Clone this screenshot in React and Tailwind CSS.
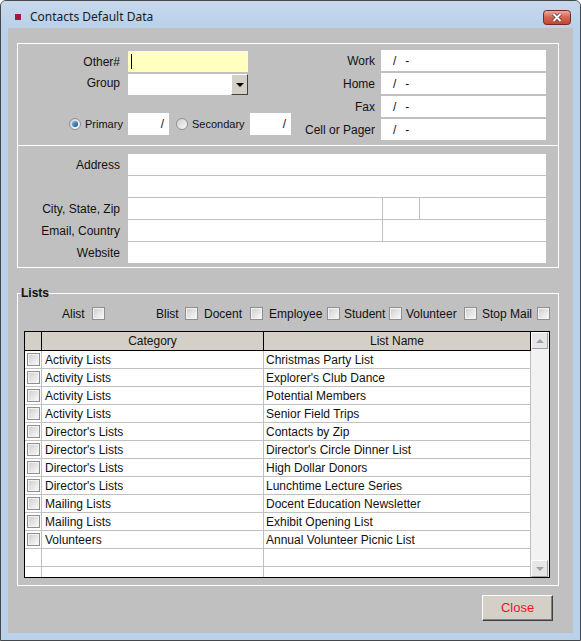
import React from "react"

const rows = [
  ["Activity Lists", "Christmas Party List"],
  ["Activity Lists", "Explorer's Club Dance"],
  ["Activity Lists", "Potential Members"],
  ["Activity Lists", "Senior Field Trips"],
  ["Director's Lists", "Contacts by Zip"],
  ["Director's Lists", "Director's Circle Dinner List"],
  ["Director's Lists", "High Dollar Donors"],
  ["Director's Lists", "Lunchtime Lecture Series"],
  ["Mailing Lists", "Docent Education Newsletter"],
  ["Mailing Lists", "Exhibit Opening List"],
  ["Volunteers", "Annual Volunteer Picnic List"],
]

const listFlags = [
  { label: "Alist", cls: "ml-[44px] w-[43px]" },
  { label: "Blist", cls: "ml-[51px] w-[42px]" },
  { label: "Docent", cls: "ml-[6px] w-[59px]" },
  { label: "Employee", cls: "ml-[6px] w-[71px]" },
  { label: "Student", cls: "ml-[4px] w-[58px]" },
  { label: "Volunteer", cls: "ml-[4px] w-[71px]" },
  { label: "Stop Mail", cls: "ml-[5px] w-[68px]" },
]

function Check() {
  return (
    <span className="block w-[13px] h-[13px] border border-[#8e8f8f] bg-gradient-to-br from-[#cdcdcd] to-[#fbfbfb] shadow-[inset_0_0_0_1px_#f2f2f2]" />
  )
}

function Radio({ checked }) {
  return (
    <span className="flex items-center justify-center w-[12px] h-[12px] rounded-full border border-[#8e8f8f] bg-gradient-to-br from-[#cfcfcf] to-[#fafafa]">
      {checked && <span className="w-[6px] h-[6px] rounded-full bg-gradient-to-br from-[#7cc0f0] to-[#0d4a88]" />}
    </span>
  )
}

function Phone() {
  return (
    <div className="w-[165px] h-[21px] bg-white flex items-center">
      <span className="ml-[12px]">/</span>
      <span className="ml-[9px]">-</span>
    </div>
  )
}

function ScrollBtn({ up }) {
  return (
    <div className="w-[17px] h-[17px] bg-[#e6e6e6] border border-t-white border-l-white border-r-[#a0a0a0] border-b-[#a0a0a0] flex items-center justify-center">
      {up ? (
        <span className="w-0 h-0 border-l-[4px] border-r-[4px] border-b-[4px] border-l-transparent border-r-transparent border-b-[#a0a0a0]" />
      ) : (
        <span className="w-0 h-0 border-l-[4px] border-r-[4px] border-t-[4px] border-l-transparent border-r-transparent border-t-[#a0a0a0]" />
      )}
    </div>
  )
}

export default function App() {
  return (
    <div className="w-[581px] h-[641px] bg-[#b9d1ea] border border-[#474747] rounded-t-[6px] flex flex-col overflow-hidden">
      {/* Title bar */}
      <div className="h-[27px] shrink-0 flex items-center pt-[5px] pl-[14px] pr-[9px] bg-gradient-to-b from-[#c6d8ec] to-[#b9d1ea]">
        <span className="w-[6px] h-[6px] bg-[#9c1c3c]" />
        <span className="ml-[9px] text-[12px] leading-[14px] text-[#1b1b1b] font-['Noto_Sans',sans-serif]">Contacts Default Data</span>
        <svg className="ml-auto" width="28" height="15" viewBox="0 0 28 15">
          <defs>
            <linearGradient id="xg" x1="0" y1="0" x2="0" y2="1">
              <stop offset="0" stopColor="#eab0a4" />
              <stop offset="0.45" stopColor="#d66a56" />
              <stop offset="1" stopColor="#c1432d" />
            </linearGradient>
          </defs>
          <rect x="0.5" y="0.5" width="27" height="14" rx="3" fill="url(#xg)" stroke="#6f2b22" />
          <path d="M10.5 4 L17.5 11 M17.5 4 L10.5 11" stroke="#5a3a35" strokeWidth="3.6" />
          <path d="M10.5 4 L17.5 11 M17.5 4 L10.5 11" stroke="#ffffff" strokeWidth="2" />
        </svg>
      </div>

      {/* Client area */}
      <div className="ml-[7px] w-[565px] h-[605px] shrink-0 bg-[#c0c0c0] text-[12px] leading-[14px] text-[#111] font-['Liberation_Sans',Arial,sans-serif] flex flex-col">
        {/* Contact numbers + address */}
        <div className="ml-[9px] mt-[15px] w-[542px] h-[225px] border border-white">
          <div className="h-[102px] border-b border-white flex">
            <div className="w-[282px] pt-[7px]">
              <div className="flex items-center h-[21px]">
                <span className="w-[102px] text-right">Other#</span>
                <div className="ml-[8px] w-[120px] h-[21px] bg-[#ffffc0] flex items-center">
                  <span className="ml-[3px] w-[1px] h-[15px] bg-black" />
                </div>
              </div>
              <div className="flex items-start h-[21px] mt-[2px]">
                <span className="w-[102px] text-right mt-[2px]">Group</span>
                <div className="ml-[8px] w-[120px] h-[21px] flex">
                  <div className="w-[103px] bg-white" />
                  <div className="w-[17px] bg-[#d4d0c8] border border-t-white border-l-white border-r-[#404040] border-b-[#404040] flex items-center justify-center">
                    <span className="w-0 h-0 border-l-[4px] border-r-[4px] border-t-[4px] border-l-transparent border-r-transparent border-t-black" />
                  </div>
                </div>
              </div>
              <div className="flex items-center h-[22px] mt-[18px] text-[11px]">
                <div className="w-[110px] pl-[51px] flex items-center">
                  <Radio checked />
                  <span className="ml-[4px]">Primary</span>
                </div>
                <div className="w-[41px] h-[22px] bg-white flex items-center justify-end pr-[5px] text-[12px]">/</div>
                <div className="w-[81px] pl-[7px] flex items-center">
                  <Radio />
                  <span className="ml-[4px]">Secondary</span>
                </div>
                <div className="w-[41px] h-[22px] bg-white flex items-center justify-end pr-[5px] text-[12px]">/</div>
              </div>
            </div>
            <div className="pt-[6px] flex flex-col gap-[2px]">
              {["Work", "Home", "Fax", "Cell or Pager"].map((l) => (
                <div key={l} className="flex items-center h-[21px]">
                  <span className="w-[75px] text-right">{l}</span>
                  <div className="ml-[6px]">
                    <Phone />
                  </div>
                </div>
              ))}
            </div>
          </div>
          <div className="pt-[8px] flex flex-col gap-[1px]">
            <div className="flex items-center h-[21px]">
              <span className="w-[102px] text-right">Address</span>
              <div className="ml-[8px] w-[418px] h-[21px] bg-white" />
            </div>
            <div className="flex items-center h-[21px]">
              <span className="w-[102px]" />
              <div className="ml-[8px] w-[418px] h-[21px] bg-white" />
            </div>
            <div className="flex items-center h-[21px]">
              <span className="w-[102px] text-right">City, State, Zip</span>
              <div className="ml-[8px] w-[418px] h-[21px] flex gap-[1px]">
                <div className="w-[254px] bg-white" />
                <div className="w-[36px] bg-white" />
                <div className="flex-1 bg-white" />
              </div>
            </div>
            <div className="flex items-center h-[21px]">
              <span className="w-[102px] text-right">Email, Country</span>
              <div className="ml-[8px] w-[418px] h-[21px] flex gap-[1px]">
                <div className="w-[254px] bg-white" />
                <div className="flex-1 bg-white" />
              </div>
            </div>
            <div className="flex items-center h-[21px]">
              <span className="w-[102px] text-right">Website</span>
              <div className="ml-[8px] w-[418px] h-[21px] bg-white" />
            </div>
          </div>
        </div>

        {/* Lists */}
        <fieldset className="ml-[9px] mt-[18px] w-[542px] h-[300px] border border-white">
          <legend className="ml-[3px] font-bold leading-[14px]">Lists</legend>
          <div className="mt-[7px] h-[13px] flex items-center">
            {listFlags.map((f) => (
              <div key={f.label} className={`${f.cls} flex items-center justify-between`}>
                <span>{f.label}</span>
                <Check />
              </div>
            ))}
          </div>

          <div className="ml-[6px] mt-[11px] w-[526px] h-[247px] border border-black flex">
            <div className="w-[506px] flex flex-col overflow-hidden">
              <div className="grid grid-cols-[17px_222px_1fr] h-[19px] shrink-0 bg-[#d4d0c8] border-b border-black">
                <div className="border-r border-black" />
                <div className="border-r border-black flex items-center justify-center">Category</div>
                <div className="border-r border-black flex items-center justify-center">List Name</div>
              </div>
              {rows.map(([cat, name], i) => (
                <div key={i} className="grid grid-cols-[17px_222px_1fr] h-[18px] shrink-0 bg-white border-b border-[#c0c0c0]">
                  <div className="border-r border-[#c0c0c0] flex items-center pl-[2px]">
                    <Check />
                  </div>
                  <div className="border-r border-[#c0c0c0] flex items-center pl-[3px]">{cat}</div>
                  <div className="border-r border-[#c0c0c0] flex items-center pl-[2px]">{name}</div>
                </div>
              ))}
              {[0, 1, 2].map((i) => (
                <div key={`e${i}`} className="grid grid-cols-[17px_222px_1fr] h-[18px] shrink-0 bg-white border-b border-[#c0c0c0]">
                  <div className="border-r border-[#c0c0c0]" />
                  <div className="border-r border-[#c0c0c0]" />
                  <div className="border-r border-[#c0c0c0]" />
                </div>
              ))}
            </div>
            <div className="w-[18px] bg-[#f2f2f2] flex flex-col justify-between">
              <ScrollBtn up />
              <ScrollBtn />
            </div>
          </div>
        </fieldset>

        <div className="mt-[9px] pr-[20px] flex justify-end">
          <button className="w-[71px] h-[26px] bg-[#d4d0c8] border border-t-white border-l-white border-r-[#404040] border-b-[#404040] shadow-[inset_-1px_-1px_0_#808080] text-[13px] text-[#f0141e]">
            Close
          </button>
        </div>
      </div>
    </div>
  )
}
